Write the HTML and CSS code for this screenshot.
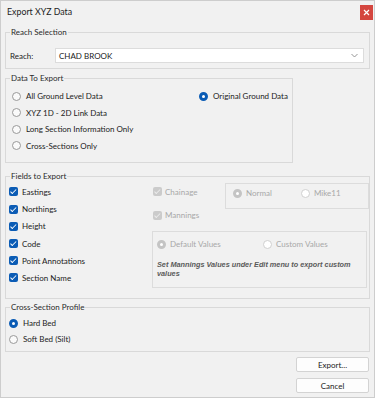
FILE: index.html
```html
<!DOCTYPE html>
<html lang="en">
<head>
  <meta charset="UTF-8" />
  <title>Export XYZ Data</title>
  <link rel="stylesheet" href="styles.css">
</head>
<body>
  <div class="window">
    <div class="titlebar">
      <span class="title">Export XYZ Data</span>
      <span class="close-btn">
        <svg width="7" height="7" viewBox="0 0 7 7"><path d="M1 1L6 6M6 1L1 6" stroke="#fff" stroke-width="1.2" fill="none"/></svg>
      </span>
    </div>

    <fieldset class="group reach">
      <legend>Reach Selection</legend>
      <div class="reach-row">
        <span class="reach-label">Reach:</span>
        <div class="combo">
          <span>CHAD BROOK</span>
          <svg width="7" height="5" viewBox="0 0 7 5"><path d="M0.5 1L3.5 4L6.5 1" stroke="#8a8a8a" stroke-width="0.9" fill="none"/></svg>
        </div>
      </div>
    </fieldset>

    <fieldset class="group data">
      <legend>Data To Export</legend>
      <div class="data-grid">
        <div class="col">
          <div class="opt"><span class="radio"></span>All Ground Level Data</div>
          <div class="opt"><span class="radio"></span>XYZ 1D - 2D Link Data</div>
          <div class="opt"><span class="radio"></span>Long Section Information Only</div>
          <div class="opt"><span class="radio"></span>Cross-Sections Only</div>
        </div>
        <div class="col">
          <div class="opt"><span class="radio on"></span>Original Ground Data</div>
        </div>
      </div>
    </fieldset>

    <fieldset class="group fields">
      <legend>Fields to Export</legend>
      <div class="fields-grid">
        <div class="col checks">
          <div class="opt tall"><span class="check"></span>Eastings</div>
          <div class="opt tall"><span class="check"></span>Northings</div>
          <div class="opt tall"><span class="check"></span>Height</div>
          <div class="opt tall"><span class="check"></span>Code</div>
          <div class="opt tall"><span class="check"></span>Point Annotations</div>
          <div class="opt tall"><span class="check"></span>Section Name</div>
        </div>
        <div class="manning">
          <div class="chain-row">
            <div class="opt tall off chain"><span class="check dis"></span>Chainage</div>
            <div class="mode-box">
              <div class="opt off mode"><span class="radio dis-on"></span>Normal</div>
              <div class="opt off"><span class="radio dis"></span>Mike11</div>
            </div>
          </div>
          <div class="opt off mannings"><span class="check dis"></span>Mannings</div>
          <div class="values-box">
            <div class="values-row">
              <div class="opt off default"><span class="radio dis-on"></span>Default Values</div>
              <div class="opt off"><span class="radio dis"></span>Custom Values</div>
            </div>
            <p class="note">Set Mannings Values under Edit menu to export custom values</p>
          </div>
        </div>
      </div>
    </fieldset>

    <fieldset class="group profile">
      <legend>Cross-Section Profile</legend>
      <div class="col">
        <div class="opt"><span class="radio on"></span>Hard Bed</div>
        <div class="opt"><span class="radio"></span>Soft Bed (Silt)</div>
      </div>
    </fieldset>

    <div class="actions">
      <button class="btn">Export...</button>
      <button class="btn">Cancel</button>
    </div>
  </div>
</body>
</html>
```

FILE: styles.css
```css
* {
  box-sizing: border-box;
  margin: 0;
  padding: 0;
}

html, body {
  width: 375px;
  height: 398px;
  background: #f0f0f0;
  overflow: hidden;
}

body {
  font-family: Lato, 'Liberation Sans', sans-serif;
  font-size: 8px;
  color: #222;
}

.window {
  width: 375px;
  height: 398px;
  background: #f1f1f1;
  box-shadow: inset 0 0 0 1px #cdcdcd;
}

.titlebar {
  height: 27px;
  display: flex;
  justify-content: space-between;
  align-items: flex-start;
  padding: 5px 2px 0 7px;
}

.title {
  font-size: 8.8px;
  line-height: 14px;
}

.close-btn {
  width: 13px;
  height: 15px;
  background: #d4463f;
  display: flex;
  align-items: center;
  justify-content: center;
}

.group {
  margin: 0 5px;
  padding: 0;
  border: 1px solid #d9d9d9;
  min-width: 0;
}

.group legend {
  margin-left: 4px;
  padding: 0 1px;
  line-height: 10px;
  height: 10px;
  color: #2a2a2a;
}

/* reach */
.reach-row {
  display: flex;
  align-items: center;
  padding: 11px 5px 5px 4px;
}

.reach-label {
  width: 45px;
}

.combo {
  flex: 1;
  height: 15px;
  background: #fff;
  border: 1px solid #dcdcdc;
  display: flex;
  align-items: center;
  justify-content: space-between;
  padding: 0 5px 0 3px;
}

/* data to export */
.data {
  width: 288px;
  margin-top: 4px;
}

.data-grid {
  display: grid;
  grid-template-columns: 187px auto;
  padding: 5px 0 8px 6px;
}

.opt {
  display: flex;
  align-items: center;
  gap: 5px;
  height: 16.5px;
  white-space: nowrap;
}

.opt.tall {
  height: 17.2px;
}

.opt.off {
  color: #a8a8a8;
}

.radio {
  width: 9px;
  height: 9px;
  border-radius: 50%;
  border: 1px solid #999;
  background: #fafafa;
  flex: none;
}

.radio.on {
  border: 3px solid #0b5cb5;
  background: #fff;
}

.radio.dis-on {
  border: 3px solid #c4c4c4;
  background: #fff;
}

.radio.dis {
  border-color: #d0d0d0;
  background: #fff;
}

.check {
  width: 9px;
  height: 9px;
  border-radius: 2px;
  background: #0b5cb5;
  flex: none;
  position: relative;
}

.check::after {
  content: "";
  position: absolute;
  left: 3px;
  top: 1px;
  width: 2px;
  height: 4.5px;
  border: solid #fff;
  border-width: 0 1.2px 1.2px 0;
  transform: rotate(45deg);
}

.check.dis {
  background: #cbcbcb;
}

.check.dis::after {
  border-color: #ececec;
}

/* fields to export */
.fields {
  margin-top: 8px;
}

.fields-grid {
  display: grid;
  grid-template-columns: 143px 1fr;
  padding: 2.4px 0 10px 3px;
}

.checks .opt {
  gap: 4px;
}

.chain-row {
  display: flex;
  align-items: flex-start;
}

.chain {
  width: 73px;
  padding-left: 1px;
  gap: 3px;
}

.mode-box {
  flex: 1;
  height: 26px;
  border: 1px solid #dcdcdc;
  display: flex;
  align-items: flex-start;
  padding: 4px 0 0 7px;
}

.mode-box .opt {
  height: 10px;
  gap: 4px;
}

.mode {
  width: 68px;
}

.mannings {
  height: 12px;
  padding-left: 1px;
  gap: 3px;
}

.values-box {
  margin: 10px 2px 0 0;
  height: 57px;
  border: 1px solid #dcdcdc;
  padding: 7px 4px 0 4px;
}

.values-row {
  display: flex;
}

.values-row .opt {
  height: 10px;
  gap: 4px;
}

.default {
  width: 106px;
}

.note {
  margin-top: 10.5px;
  font-family: 'Liberation Sans', sans-serif;
  font-size: 7.3px;
  line-height: 9px;
  font-weight: bold;
  font-style: italic;
  color: #5a5a5a;
}

/* cross-section profile */
.profile {
  margin-top: 3px;
}

.profile .col {
  padding: 3px 0 4px 3px;
}

.profile .opt {
  height: 16px;
}

/* buttons */
.actions {
  display: flex;
  flex-direction: column;
  align-items: flex-end;
  gap: 6px;
  margin-top: 5px;
  padding-right: 6px;
}

.btn {
  width: 73px;
  height: 15px;
  background: #fdfdfd;
  border: 1px solid #d3d3d3;
  border-radius: 2px;
  font-family: inherit;
  font-size: 8px;
  color: #222;
}
```
